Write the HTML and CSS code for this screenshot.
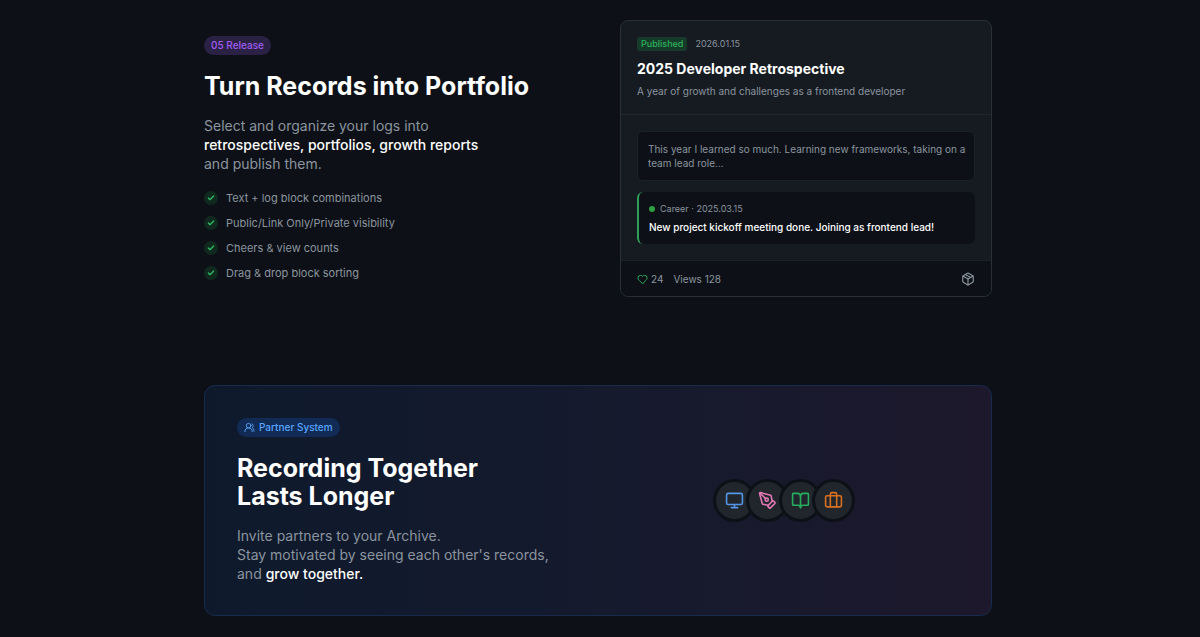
FILE: index.html
```html
<!DOCTYPE html>
<html lang="en">
<head>
    <meta charset="UTF-8">
    <meta name="viewport" content="width=device-width, initial-scale=1.0">
    <title>Turn Records into Portfolio</title>
    <link rel="stylesheet" href="styles.css">
</head>
<body>
    <main class="page">
        <section class="release">
            <div class="release-text">
                <span class="badge badge-purple">05 Release</span>
                <h2 class="title">Turn Records into Portfolio</h2>
                <p class="lead">
                    Select and organize your logs into<br>
                    <strong>retrospectives, portfolios, growth reports</strong><br>
                    and publish them.
                </p>
                <ul class="checks">
                    <li><span class="check"><svg class="icon" viewBox="0 0 24 24"><path d="M20 6 9 17l-5-5"/></svg></span>Text + log block combinations</li>
                    <li><span class="check"><svg class="icon" viewBox="0 0 24 24"><path d="M20 6 9 17l-5-5"/></svg></span>Public/Link Only/Private visibility</li>
                    <li><span class="check"><svg class="icon" viewBox="0 0 24 24"><path d="M20 6 9 17l-5-5"/></svg></span>Cheers &amp; view counts</li>
                    <li><span class="check"><svg class="icon" viewBox="0 0 24 24"><path d="M20 6 9 17l-5-5"/></svg></span>Drag &amp; drop block sorting</li>
                </ul>
            </div>
            <article class="card">
                <header class="card-header">
                    <div class="card-meta">
                        <span class="status">Published</span>
                        <time class="date">2026.01.15</time>
                    </div>
                    <h3 class="card-title">2025 Developer Retrospective</h3>
                    <p class="card-desc">A year of growth and challenges as a frontend developer</p>
                </header>
                <div class="card-body">
                    <p class="block">This year I learned so much. Learning new frameworks, taking on a team lead role...</p>
                    <div class="block log">
                        <div class="log-meta"><span class="dot"></span>Career · 2025.03.15</div>
                        <p class="log-text">New project kickoff meeting done. Joining as frontend lead!</p>
                    </div>
                </div>
                <footer class="card-footer">
                    <span class="likes">
                        <svg class="icon" viewBox="0 0 24 24"><path d="M19 14c1.49-1.46 3-3.21 3-5.5A5.5 5.5 0 0 0 16.500 3c-1.760 0-3 .5-4.500 2-1.500-1.500-2.740-2-4.500-2A5.500 5.500 0 0 0 2 8.500c0 2.300 1.500 4.050 3 5.500l7 7Z"/></svg>
                        24
                    </span>
                    <span>Views 128</span>
                    <svg class="icon box" viewBox="0 0 24 24"><path d="M11 21.730a2 2 0 0 0 2 0l7-4A2 2 0 0 0 21 16V8a2 2 0 0 0-1-1.730l-7-4a2 2 0 0 0-2 0l-7 4A2 2 0 0 0 3 8v8a2 2 0 0 0 1 1.730z"/><path d="M12 22V12"/><path d="m3.300 7 8.700 5 8.700-5"/><path d="m7.500 4.270 9 5.150"/></svg>
                </footer>
            </article>
        </section>

        <section class="partner">
            <div class="partner-text">
                <span class="badge badge-blue">
                    <svg class="icon" viewBox="0 0 24 24"><path d="M18 21a8 8 0 0 0-16 0"/><circle cx="10" cy="8" r="5"/><path d="M22 20c0-3.370-2-6.500-4-8a5 5 0 0 0-.450-8.300"/></svg>
                    Partner System
                </span>
                <h2 class="title">Recording Together<br>Lasts Longer</h2>
                <p class="lead">
                    Invite partners to your Archive.<br>
                    Stay motivated by seeing each other's records,<br>
                    and <strong>grow together.</strong>
                </p>
            </div>
            <div class="avatars">
                <span class="avatar blue"><svg class="icon" viewBox="0 0 24 24"><rect x="2" y="3" width="20" height="14" rx="2"/><path d="M8 21h8M12 17v4"/></svg></span>
                <span class="avatar pink"><svg class="icon" viewBox="0 0 24 24"><path d="M15.707 21.293a1 1 0 0 1-1.414 0l-1.586-1.586a1 1 0 0 1 0-1.414l5.586-5.586a1 1 0 0 1 1.414 0l1.586 1.586a1 1 0 0 1 0 1.414z"/><path d="m18 13-1.375-6.874a1 1 0 0 0-.746-.776L3.235 2.028a1 1 0 0 0-1.207 1.207L5.350 15.879a1 1 0 0 0 .776.746L13 18"/><path d="m2.300 2.300 7.286 7.286"/><circle cx="11" cy="11" r="2"/></svg></span>
                <span class="avatar green"><svg class="icon" viewBox="0 0 24 24"><path d="M12 7v14"/><path d="M3 18a1 1 0 0 1-1-1V4a1 1 0 0 1 1-1h5a4 4 0 0 1 4 4 4 4 0 0 1 4-4h5a1 1 0 0 1 1 1v13a1 1 0 0 1-1 1h-6a3 3 0 0 0-3 3 3 3 0 0 0-3-3z"/></svg></span>
                <span class="avatar orange"><svg class="icon" viewBox="0 0 24 24"><rect x="2" y="6" width="20" height="14" rx="2"/><path d="M8 20V4a2 2 0 0 1 2-2h4a2 2 0 0 1 2 2v16"/></svg></span>
            </div>
        </section>
    </main>
</body>
</html>
```

FILE: styles.css
```css
* {
    margin: 0;
    padding: 0;
    box-sizing: border-box;
}
body {
    font-family: Inter, "Liberation Sans", sans-serif;
    background: #0d1117;
    color: #8b949e;
    min-height: 100vh;
    padding: 20px 28px 20px 24px;
}
.page {
    max-width: 788px;
    margin: 0 auto;
}
.icon {
    display: block;
    flex-shrink: 0;
    fill: none;
    stroke: currentColor;
    stroke-width: 2;
    stroke-linecap: round;
    stroke-linejoin: round;
}
.badge {
    display: flex;
    align-items: center;
    gap: 4px;
    width: fit-content;
    padding: 2px 7px;
    border-radius: 10px;
    font-size: 10px;
    line-height: 15px;
    font-weight: 500;
    margin-bottom: 17px;
}
.badge .icon {
    width: 11px;
    height: 11px;
}
.badge-purple {
    background: #2b2145;
    color: #a05cf0;
}
.badge-blue {
    background: #122b54;
    color: #58a6ff;
}
.title {
    font-size: 25px;
    line-height: 28px;
    font-weight: 700;
    color: #fff;
    margin-bottom: 16px;
}
.lead {
    font-size: 14px;
    line-height: 19px;
}
.lead strong {
    font-weight: 500;
    color: #fff;
}

/* release */
.release {
    display: grid;
    grid-template-columns: 1fr 1fr;
    gap: 44px;
    align-items: center;
    margin-bottom: 88px;
}
.checks {
    list-style: none;
    margin-top: 17px;
}
.checks li {
    display: flex;
    align-items: center;
    gap: 8px;
    font-size: 11px;
    line-height: 16px;
    margin-bottom: 9px;
}
.checks li:last-child {
    margin-bottom: 0;
}
.check {
    display: flex;
    align-items: center;
    justify-content: center;
    width: 14px;
    height: 14px;
    border-radius: 50%;
    background: #10291f;
    color: #2fb862;
}
.check .icon {
    width: 8px;
    height: 8px;
    stroke-width: 4;
}
.card {
    border: 1px solid #2a2f37;
    border-radius: 8px;
    background: #161b22;
    overflow: hidden;
    font-size: 10px;
    line-height: 14px;
}
.card-header {
    padding: 16px;
    border-bottom: 1px solid #21262d;
}
.card-meta {
    display: flex;
    align-items: center;
    gap: 8px;
    font-size: 9px;
    margin-bottom: 8px;
}
.status {
    padding: 0 4px;
    border-radius: 3px;
    background: #173b2a;
    color: #2cb25a;
    font-weight: 500;
}
.card-title {
    font-size: 14px;
    line-height: 19px;
    font-weight: 700;
    color: #fff;
    margin-bottom: 6px;
}
.card-body {
    padding: 16px;
    display: flex;
    flex-direction: column;
    gap: 11px;
}
.block {
    padding: 10px 8px 10px 10px;
    border: 1px solid #1c2128;
    border-radius: 6px;
    background: #0d1117;
}
.log {
    border: none;
    border-left: 2px solid #2f9e5b;
}
.log-meta {
    display: flex;
    align-items: center;
    gap: 5px;
    font-size: 9px;
    margin-bottom: 4px;
}
.dot {
    width: 6px;
    height: 6px;
    border-radius: 50%;
    background: #2ea043;
}
.log-text {
    color: #fff;
    font-weight: 500;
}
.card-footer {
    display: flex;
    align-items: center;
    gap: 10px;
    padding: 11px 16px 10px;
    border-top: 1px solid #1c2128;
    background: #0d1117;
}
.likes {
    display: flex;
    align-items: center;
    gap: 3px;
}
.likes .icon {
    width: 11px;
    height: 11px;
    color: #2fb862;
}
.box {
    width: 14px;
    height: 14px;
    margin-left: auto;
}

/* partner */
.partner {
    display: grid;
    grid-template-columns: 1fr 1fr;
    gap: 20px;
    align-items: center;
    padding: 32px;
    border: 1px solid #182b4c;
    border-radius: 11px;
    background: linear-gradient(90deg, #0e1a2c, #151a2d 50%, #1d182c);
}
.avatars {
    display: flex;
    justify-content: center;
}
.avatar {
    display: flex;
    align-items: center;
    justify-content: center;
    width: 43px;
    height: 43px;
    border: 3px solid #0d1117;
    border-radius: 50%;
    background: #21262d;
}
.avatar + .avatar {
    margin-left: -10px;
}
.avatar .icon {
    width: 19px;
    height: 19px;
}
.blue {
    color: #5596e6;
}
.pink {
    color: #e279b4;
}
.green {
    color: #27ae5f;
}
.orange {
    color: #d9701f;
}
```
